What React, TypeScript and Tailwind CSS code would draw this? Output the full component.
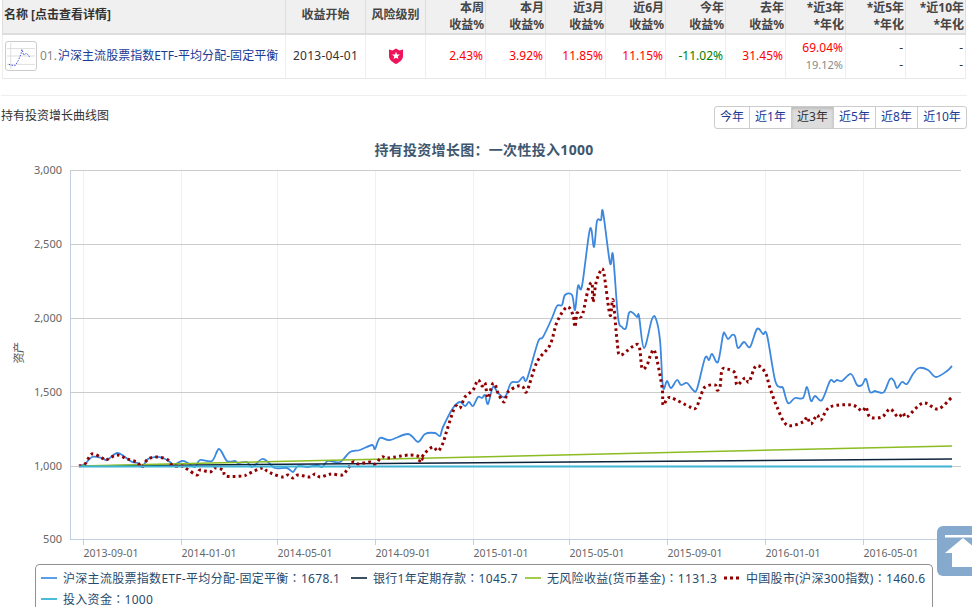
const blue: number[][] = [[79,466],[85,464],[92,457],[102,458],[107,460],[117,453],[125,457],[132,462],[138,463],[142,467],[148,459],[155,457],[163,458],[170,462],[173,465],[182,461],[188,463],[195,467],[200,460],[212,461],[219,449],[227,461],[235,461],[238,463],[247,462],[252,467],[262,459],[268,462],[275,468],[287,468],[293,472],[298,466],[308,467],[317,465],[322,467],[328,461],[340,462],[350,452],[360,450],[372,445],[375,449],[380,438],[390,440],[408,434],[418,442],[425,434],[435,433],[440,436],[443,427],[453,408],[460,402],[465,406],[469,402],[473,406],[478,397],[482,398],[485,395],[488,404],[493,387],[498,393],[505,397],[511,383],[518,382],[523,377],[527,379],[538,342],[543,337],[552,318],[557,306],[562,305],[565,295],[572,295],[575,310],[578,286],[582,286],[590,229],[594,247],[597,221],[601,220],[603,212],[610,263],[613,255],[618,317],[622,327],[626,328],[629,313],[633,313],[637,317],[639,316],[644,348],[652,319],[656,319],[660,340],[663,387],[667,381],[671,388],[677,380],[681,385],[687,383],[693,390],[697,389],[705,358],[709,360],[712,354],[718,362],[723,335],[725,334],[728,339],[732,335],[735,336],[738,348],[744,342],[750,347],[757,329],[763,334],[767,335],[775,380],[780,387],[783,388],[788,403],[795,398],[803,398],[807,387],[811,401],[815,396],[822,400],[830,381],[834,382],[837,380],[842,381],[851,374],[857,385],[862,385],[866,379],[870,392],[875,391],[878,392],[884,392],[890,379],[894,381],[897,388],[902,382],[907,384],[913,374],[919,368],[928,370],[936,377],[947,371],[952,366]];

const red: number[][] = [[79,466],[85,464],[92,454],[102,458],[106,460],[117,455],[127,459],[137,462],[142,467],[148,459],[158,457],[168,460],[173,466],[182,466],[187,469],[197,475],[200,470],[210,472],[215,468],[223,470],[226,476],[243,476],[248,474],[262,468],[267,471],[273,474],[283,477],[288,475],[293,478],[298,475],[310,477],[315,474],[320,477],[327,475],[332,474],[342,475],[347,470],[353,462],[358,464],[370,462],[375,464],[382,457],[388,458],[410,455],[422,458],[419,462],[425,453],[433,447],[438,451],[443,443],[447,430],[455,407],[460,408],[465,397],[473,390],[478,380],[482,386],[485,383],[488,398],[492,385],[495,384],[498,393],[504,402],[508,392],[518,386],[523,387],[527,391],[537,362],[550,345],[557,322],[567,307],[573,315],[575,327],[577,313],[580,317],[583,313],[588,290],[592,283],[593,302],[596,283],[601,270],[604,274],[610,315],[613,300],[617,340],[620,355],[632,347],[639,346],[642,368],[647,365],[651,354],[655,352],[662,387],[663,405],[667,399],[672,398],[690,407],[696,408],[700,398],[705,387],[715,385],[717,390],[720,387],[722,370],[727,369],[735,373],[737,385],[745,378],[749,382],[756,366],[765,372],[770,388],[777,407],[787,425],[803,422],[807,417],[811,424],[817,415],[821,420],[830,407],[852,405],[862,411],[866,407],[870,417],[882,417],[890,409],[898,417],[903,413],[907,417],[923,403],[938,409],[952,397]];

// catmull-rom so the series read as curves, not zigzags
function curve(pts: number[][]) {
  let d = `M${pts[0][0]} ${pts[0][1]}`;
  for (let i = 0; i < pts.length - 1; i++) {
    const p0 = pts[i - 1] || pts[i];
    const p1 = pts[i];
    const p2 = pts[i + 1];
    const p3 = pts[i + 2] || p2;
    const c1x = p1[0] + (p2[0] - p0[0]) / 6;
    const c1y = p1[1] + (p2[1] - p0[1]) / 6;
    const c2x = p2[0] - (p3[0] - p1[0]) / 6;
    const c2y = p2[1] - (p3[1] - p1[1]) / 6;
    d += ` C${c1x.toFixed(1)} ${c1y.toFixed(1)} ${c2x.toFixed(1)} ${c2y.toFixed(1)} ${p2[0]} ${p2[1]}`;
  }
  return d;
}

const yTicks = [
  { label: '3,000', y: 170 },
  { label: '2,500', y: 244 },
  { label: '2,000', y: 318 },
  { label: '1,500', y: 392 },
  { label: '1,000', y: 466 },
];

const xTicks = [
  { label: '2013-09-01', x: 83 },
  { label: '2014-01-01', x: 181 },
  { label: '2014-05-01', x: 277 },
  { label: '2014-09-01', x: 375 },
  { label: '2015-01-01', x: 473 },
  { label: '2015-05-01', x: 569 },
  { label: '2015-09-01', x: 667 },
  { label: '2016-01-01', x: 765 },
  { label: '2016-05-01', x: 863 },
];

const heads = [
  ['本周', '收益%'],
  ['本月', '收益%'],
  ['近3月', '收益%'],
  ['近6月', '收益%'],
  ['今年', '收益%'],
  ['去年', '收益%'],
  ['*近3年', '*年化'],
  ['*近5年', '*年化'],
  ['*近10年', '*年化'],
];

const returns = [
  { v: '2.43%', c: 'text-[#ff0000]' },
  { v: '3.92%', c: 'text-[#ff0000]' },
  { v: '11.85%', c: 'text-[#ff0000]' },
  { v: '11.15%', c: 'text-[#ff0000]' },
  { v: '-11.02%', c: 'text-[#008000]' },
  { v: '31.45%', c: 'text-[#ff0000]' },
];

const ranges = [
  { label: '今年', w: 'w-[34px]' },
  { label: '近1年', w: 'w-[42px]' },
  { label: '近3年', w: 'w-[42px]', active: true },
  { label: '近5年', w: 'w-[42px]' },
  { label: '近8年', w: 'w-[42px]' },
  { label: '近10年', w: 'w-[49px]' },
];

function LegendItem({ color, name, value, dotted, w }: { color: string; name: string; value: string; dotted?: boolean; w: string }) {
  return (
    <div className={`flex items-center gap-[6px] ${w}`}>
      <svg width="16" height="4" className="shrink-0">
        <line x1="0" y1="2" x2="16" y2="2" stroke={color} strokeWidth={dotted ? 3 : 2} strokeDasharray={dotted ? '3 3' : undefined} />
      </svg>
      <span className="whitespace-nowrap tracking-[0.3px]">
        {name}
        <span className="font-['Noto_Sans_CJK_TC']">：</span>
        {value}
      </span>
    </div>
  );
}

export default function App() {
  return (
    <div className="relative w-[972px] h-[607px] overflow-hidden bg-white text-[#333] font-['Noto_Sans','Noto_Sans_CJK_SC',sans-serif]">
      <table className="table-fixed border-collapse ml-[2px] -mt-[3px] w-[964px] text-[12px]">
        <colgroup>
          <col className="w-[283px]" />
          <col className="w-[80px]" />
          <col className="w-[60px]" />
          {heads.map((h) => (
            <col key={h[0]} className="w-[60px]" />
          ))}
        </colgroup>
        <thead>
          <tr className="h-[37px] bg-[#f0f0f0] border-b-2 border-[#ddd]">
            <th className="border-x border-[#ddd] pl-[1px] text-left font-bold">名称 [点击查看详情]</th>
            <th className="border-x border-[#ddd] font-bold text-[#444]">收益开始</th>
            <th className="border-x border-[#ddd] font-bold text-[#444]">风险级别</th>
            {heads.map((h) => (
              <th key={h[0]} className="border-x border-[#ddd] pr-[1px] text-right font-bold text-[#444] leading-[17px] align-bottom">
                {h[0]}
                <br />
                {h[1]}
              </th>
            ))}
          </tr>
        </thead>
        <tbody>
          <tr className="h-[44px] border-b border-[#e8e8e8]">
            <td className="border-x border-[#eee] pl-[2px]">
              <div className="flex items-center gap-[3px] whitespace-nowrap">
                <div className="w-[32px] h-[30px] rounded-[3px] border border-[#ccc] shrink-0 bg-white">
                  <svg viewBox="0 0 32 30" className="w-full h-full">
                    <path d="M1 7H31M1 15H31M1 24H31" stroke="#ddd" strokeWidth="1" fill="none" />
                    <path d="M5 1V29" stroke="#ddd" strokeWidth="1" fill="none" />
                    <path d="M3 24L6 25L10 25L13 20L16 13L17 8L19 14L22 12L26 17" stroke="#2233dd" strokeWidth="1" strokeDasharray="1.5 1.5" fill="none" />
                  </svg>
                </div>
                <span className="text-[#888]">01.</span>
                <a className="-ml-[2px] tracking-[0.05px] text-[#1a3a96]">沪深主流股票指数ETF-平均分配-固定平衡</a>
              </div>
            </td>
            <td className="border-x border-[#eee] text-center text-[#333] tracking-[0.25px]">2013-04-01</td>
            <td className="border-x border-[#eee]">
              <svg viewBox="0 0 14 16" className="w-[14px] h-[16px] mx-auto">
                <path d="M0 1.5L3.5 2.5L7 0.5L10.5 2.5L14 1.5V8C14 12 10 14.5 7 16C4 14.5 0 12 0 8Z" fill="#f0125a" />
                <path d="M7 3.8L8.1 6.4L10.9 6.6L8.8 8.4L9.4 11.1L7 9.7L4.6 11.1L5.2 8.4L3.1 6.6L5.9 6.4Z" fill="#fff" />
              </svg>
            </td>
            {returns.map((r) => (
              <td key={r.v} className={`border-x border-[#eee] pr-[2px] text-right ${r.c}`}>
                {r.v}
              </td>
            ))}
            <td className="border-x border-[#eee] pr-[2px] text-right">
              <div className="text-[#ff0000] leading-[17px]">69.04%</div>
              <div className="text-[#888] text-[11px] leading-[17px]">19.12%</div>
            </td>
            <td className="border-x border-[#eee] pr-[2px] text-right leading-[17px]">
              <div>-</div>
              <div>-</div>
            </td>
            <td className="border-x border-[#eee] pr-[2px] text-right leading-[17px]">
              <div>-</div>
              <div>-</div>
            </td>
          </tr>
        </tbody>
      </table>

      <div className="mt-[16px] ml-[1px] w-[966px] border-t border-[#eee] h-[38px] flex justify-between">
        <div className="text-[12px] mt-[11px] leading-[17px]">持有投资增长曲线图</div>
        <div className="flex h-[23px] mt-[10px] rounded-[3px] border border-[#ccc] text-[12px] text-[#1a3a96]">
          {ranges.map((r, i) => (
            <div
              key={r.label}
              className={`${r.w} flex items-center justify-center ${i > 0 ? 'border-l border-[#ccc]' : ''} ${r.active ? 'bg-[#ddd] text-[#333] shadow-[inset_0_2px_3px_rgba(0,0,0,0.15)]' : ''}`}
            >
              {r.label}
            </div>
          ))}
        </div>
      </div>

      <svg width="972" height="431" viewBox="0 133 972 431" className="block">
        <text x="484" y="155" textAnchor="middle" fontSize="14" fontWeight="700" fill="#3e576f" letterSpacing="0.3">
          持有投资增长图：一次性投入1000
        </text>
        {xTicks.map((t) => (
          <line key={t.x} x1={t.x + 0.5} y1="170" x2={t.x + 0.5} y2="539" stroke="#f0f0f0" />
        ))}
        {yTicks.map((t) => (
          <line key={t.y} x1="70" y1={t.y + 0.5} x2="961" y2={t.y + 0.5} stroke="#cccccc" />
        ))}
        <line x1="70.5" y1="170" x2="70.5" y2="540" stroke="#c0d0e0" />
        <line x1="70" y1="539.5" x2="961" y2="539.5" stroke="#c0d0e0" />
        {xTicks.map((t) => (
          <g key={t.label}>
            <line x1={t.x + 0.5} y1="540" x2={t.x + 0.5} y2="545" stroke="#c0d0e0" />
            <text x={t.x + 28} y="557" textAnchor="middle" fontSize="10.5" fill="#666">
              {t.label}
            </text>
          </g>
        ))}
        {yTicks.concat({ label: '500', y: 539 }).map((t) => (
          <text key={t.label} x="62" y={t.y + 4} textAnchor="end" fontSize="11" fill="#666">
            {t.label}
          </text>
        ))}
        <text x="23" y="353" textAnchor="middle" fontSize="11" fill="#555" transform="rotate(-90 23 353)" letterSpacing="-0.5">
          资产
        </text>
        <path d={curve(blue)} fill="none" stroke="#3d88df" strokeWidth="1.8" strokeLinejoin="round" />
        <line x1="79" y1="466" x2="952" y2="459" stroke="#0d233a" strokeWidth="1.5" />
        <line x1="79" y1="466" x2="952" y2="446" stroke="#8bbc21" strokeWidth="1.5" />
        <path d={curve(red)} fill="none" stroke="#910000" strokeWidth="3" strokeDasharray="2.6 3.2" />
        <line x1="79" y1="466.5" x2="952" y2="466.5" stroke="#3fb4d6" strokeWidth="2" />
      </svg>

      <div className="ml-[35px] w-[898px] h-[60px] border border-b-0 border-[#909090] rounded-t-[5px] pl-[5px] pt-[3px] text-[12px] leading-[20px] text-[#274b6d]">
        <div className="flex">
          <LegendItem w="w-[310px]" color="#5a9ee6" name="沪深主流股票指数ETF-平均分配-固定平衡" value="1678.1" />
          <LegendItem w="w-[174px]" color="#3c4f63" name="银行1年定期存款" value="1045.7" />
          <LegendItem w="w-[199px]" color="#a2cc4e" name="无风险收益(货币基金)" value="1131.3" />
          <LegendItem w="w-[205px]" color="#910000" dotted name="中国股市(沪深300指数)" value="1460.6" />
        </div>
        <LegendItem w="w-[200px]" color="#4bbcd8" name="投入资金" value="1000" />
      </div>

      <div className="absolute left-[937px] top-[526px] w-[50px] h-[50px] rounded-[6px] bg-[#85aacd]">
        <svg viewBox="0 0 50 50" className="w-full h-full">
          <rect x="8" y="9" width="34" height="2.5" fill="#fff" />
          <path d="M26 12L8 27H15V41H37V27H44Z" fill="#fff" />
        </svg>
      </div>
    </div>
  );
}
